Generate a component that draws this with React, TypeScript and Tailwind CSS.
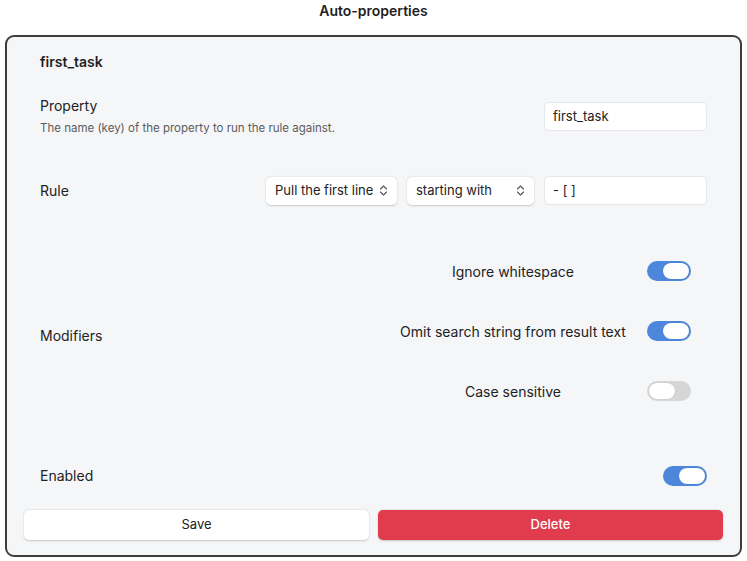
import type { ReactNode } from 'react';

const FONT = "font-['Inter','Liberation_Sans',sans-serif]";

function Toggle({ on }: { on: boolean }) {
  return (
    <div
      className={`flex h-[20px] w-[44px] shrink-0 items-center rounded-full px-[2px] ${
        on ? 'justify-end bg-[#4c87dc]' : 'justify-start bg-[#d6d6d6]'
      }`}
    >
      <div className="h-[16px] w-[26px] rounded-full bg-white shadow-[0_0_1px_rgba(0,0,0,0.2)]" />
    </div>
  );
}

function Chevrons() {
  return (
    <svg width="9" height="11" viewBox="0 0 9 11" fill="none" stroke="#555" strokeWidth="1.1" strokeLinecap="round" strokeLinejoin="round">
      <path d="M1.5 4 L4.5 1 L7.5 4" />
      <path d="M1.5 7 L4.5 10 L7.5 7" />
    </svg>
  );
}

function Select({ label, width }: { label: string; width: string }) {
  return (
    <div
      className={`flex h-[28px] ${width} items-center justify-between rounded-[5px] bg-white pl-[9px] pr-[9px] text-[13px] text-[#222] shadow-[0_0.5px_2px_rgba(0,0,0,0.18)]`}
    >
      <span>{label}</span>
      <Chevrons />
    </div>
  );
}

function Input({ value }: { value: string }) {
  return (
    <div className="flex h-[29px] w-[163px] items-center rounded-[5px] border border-[#e6e7ea] bg-white px-[8px] text-[13px] text-[#222]">
      {value}
    </div>
  );
}

function Modifier({ label, on }: { label: string; on: boolean }) {
  return (
    <div className="flex h-[20px] items-center gap-[16px]">
      <span className="w-[236px] text-center text-[14px] text-[#222]">{label}</span>
      <Toggle on={on} />
    </div>
  );
}

function Label({ children }: { children: ReactNode }) {
  return <div className="text-[14px] leading-[18px] text-[#222]">{children}</div>;
}

export default function App() {
  return (
    <div className={`h-[561px] w-[747px] overflow-hidden bg-white ${FONT}`}>
      <div className="flex h-[35px] justify-center pt-[1px]">
        <span className="text-[14px] font-semibold leading-[20px] text-[#1f1f1f]">Auto-properties</span>
      </div>
      <div className="mx-[5px] flex h-[522px] flex-col rounded-[9px] border-2 border-[#3d3d3d] bg-[#f5f6f8]">
        <div className="px-[33px] pt-[15px]">
          <div className="text-[14px] font-semibold leading-[20px] text-[#1f1f1f]">first_task</div>

          <div className="mt-[25px] flex items-start justify-between">
            <div>
              <Label>Property</Label>
              <div className="mt-[5px] text-[11.5px] leading-[16px] text-[#5c5c5c]">
                The name (key) of the property to run the rule against.
              </div>
            </div>
            <div className="mt-[5px]">
              <Input value="first_task" />
            </div>
          </div>

          <div className="mt-[40px] flex h-[29px] items-center justify-between">
            <Label>Rule</Label>
            <div className="flex items-center gap-[10px]">
              <Select label="Pull the first line" width="w-[131px]" />
              <Select label="starting with" width="w-[127px]" />
              <Input value="- [ ]" />
            </div>
          </div>

          <div className="mt-[56px] flex items-center justify-between">
            <div className="mt-[10px]">
              <Label>Modifiers</Label>
            </div>
            <div className="mr-[16px] flex flex-col gap-[40px]">
              <Modifier label="Ignore whitespace" on />
              <Modifier label="Omit search string from result text" on />
              <Modifier label="Case sensitive" on={false} />
            </div>
          </div>

          <div className="mt-[65px] flex h-[20px] items-center justify-between">
            <Label>Enabled</Label>
            <Toggle on />
          </div>
        </div>

        <div className="mt-[24px] flex gap-[9px] px-[17px]">
          <button className="h-[30px] flex-1 rounded-[5px] bg-white text-[13px] text-[#222] shadow-[0_0.5px_2px_rgba(0,0,0,0.2)]">
            Save
          </button>
          <button className="h-[30px] flex-1 rounded-[5px] bg-[#e13b4e] text-[13px] font-medium text-white shadow-[0_0.5px_2px_rgba(0,0,0,0.2)]">
            Delete
          </button>
        </div>
      </div>
    </div>
  );
}
